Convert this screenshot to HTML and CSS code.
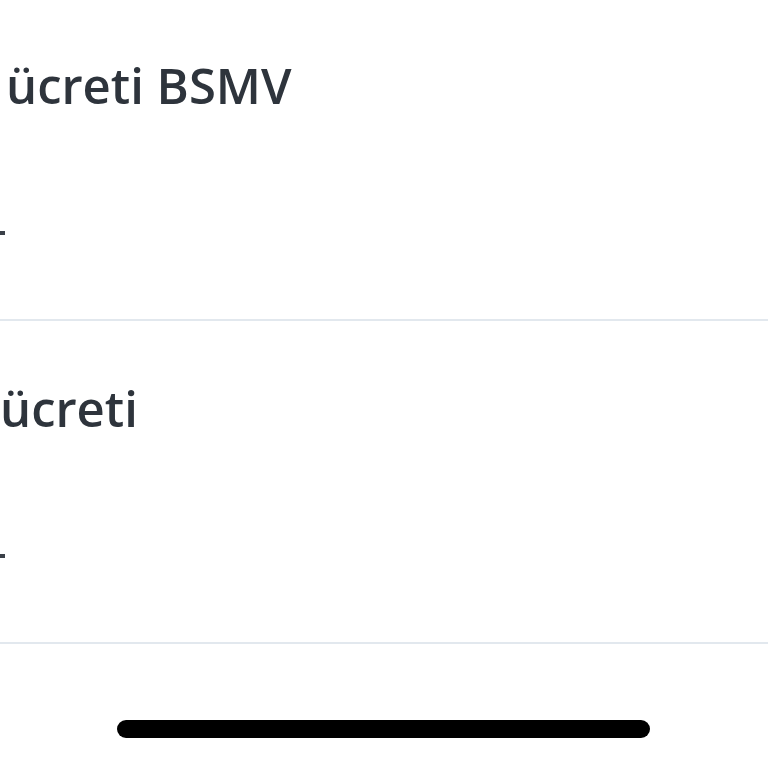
FILE: index.html
```html
<!DOCTYPE html>
<html lang="tr">
<head>
<meta charset="utf-8">
<link rel="stylesheet" href="styles.css">
</head>
<body>
<div class="screen">
  <div class="row row-first">
    <div class="title title-a">ücreti BSMV</div>
    <div class="dash"></div>
  </div>
  <div class="row row-second">
    <div class="title title-b">ücreti</div>
    <div class="dash"></div>
  </div>
  <div class="home">
    <div class="home-bar"></div>
  </div>
</div>
</body>
</html>
```

FILE: styles.css
```css
html, body {
  margin: 0;
  padding: 0;
  background: #ffffff;
}
.screen {
  width: 768px;
  height: 768px;
  overflow: hidden;
  display: flex;
  flex-direction: column;
  font-family: "Open Sans", "Noto Sans", sans-serif;
}
.row {
  display: flex;
  flex-direction: column;
  border-bottom: 2px solid #e2e8ee;
  box-sizing: border-box;
}
.row-first {
  height: 321px;
  padding-top: 52px;
}
.row-second {
  height: 323px;
  padding-top: 54px;
}
.title {
  font-size: 49px;
  font-weight: 600;
  line-height: 67px;
  color: #2e343c;
  white-space: nowrap;
}
.title-a {
  padding-left: 6px;
}
.title-b {
  padding-left: 0;
}
.dash {
  margin-top: 112px;
  width: 5px;
  height: 4px;
  background: #3a4048;
}
.home {
  display: flex;
  justify-content: center;
  padding-top: 76px;
  padding-right: 2px;
}
.home-bar {
  width: 533px;
  height: 18px;
  border-radius: 9px;
  background: #000000;
}
```
